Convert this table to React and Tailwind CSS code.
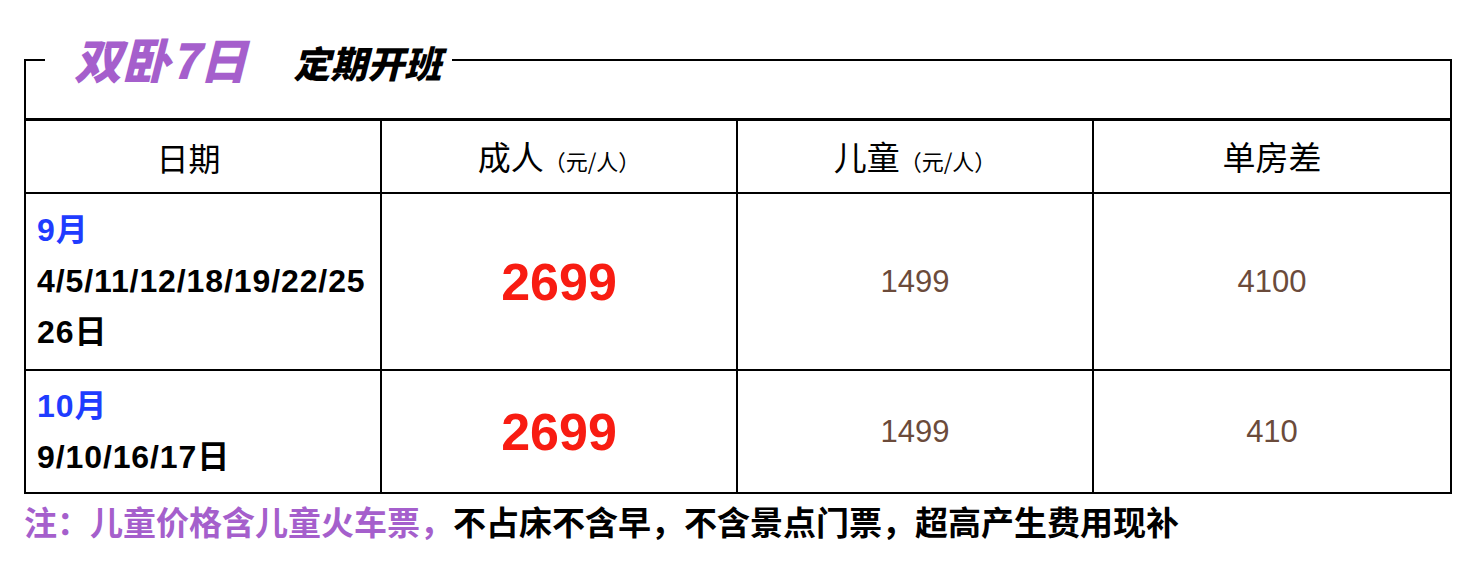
import React from "react";

const cjk = "font-['Noto_Sans_CJK_SC',sans-serif]";
const mixed = "font-['Liberation_Sans','Noto_Sans_CJK_SC',sans-serif]";

function Cell({ children, className = "" }) {
  return <div className={`flex items-center ${className}`}>{children}</div>;
}

function HeadWithUnit({ main }) {
  return (
    <div className={`${cjk} flex items-baseline text-black`}>
      <span className="text-[33px]">{main}</span>
      <span className="text-[22px]">（元/人）</span>
    </div>
  );
}

export default function App() {
  const rows = [
    {
      month: "9月",
      dates: ["4/5/11/12/18/19/22/25", "26日"],
      adult: "2699",
      child: "1499",
      single: "4100",
      h: "h-[177px] border-b-2",
    },
    {
      month: "10月",
      dates: ["9/10/16/17日"],
      adult: "2699",
      child: "1499",
      single: "410",
      h: "h-[121px]",
    },
  ];

  return (
    <div className={`w-[1464px] h-[572px] bg-white pl-[24px] pt-[35px] ${mixed}`}>
      <fieldset className="m-0 w-[1428px] border-2 border-black p-0">
        <legend className="ml-[19px] p-0">
          <div className="flex h-[50px] items-end pl-[29px] pr-[11px]">
            <span className={`${cjk} mb-[3px] text-[48px] leading-none font-black italic text-[#a55fcc]`}>
              双卧7日
            </span>
            <span className={`${cjk} mb-[4px] ml-[46px] text-[37px] leading-none font-black italic text-black`}>
              定期开班
            </span>
          </div>
        </legend>
        <div className="h-[33px]" />
        <div className="grid grid-cols-4 border-t-[3px] border-black">
          <Cell className="h-[73px] justify-center border-r-2 border-b-2 border-black pr-[29px]">
            <span className={`${cjk} text-[32px] text-black`}>日期</span>
          </Cell>
          <Cell className="h-[73px] justify-center border-r-2 border-b-2 border-black">
            <HeadWithUnit main="成人" />
          </Cell>
          <Cell className="h-[73px] justify-center border-r-2 border-b-2 border-black">
            <HeadWithUnit main="儿童" />
          </Cell>
          <Cell className="h-[73px] justify-center border-b-2 border-black">
            <span className={`${cjk} text-[33px] text-black`}>单房差</span>
          </Cell>

          {rows.map((r, i) => (
            <React.Fragment key={i}>
              <Cell className={`${r.h} border-r-2 border-black pl-[11px]`}>
                <div className="text-[32px] leading-[51px] font-bold tracking-[0.9px]">
                  <div className="text-[#1f3cff]">{r.month}</div>
                  {r.dates.map((d) => (
                    <div key={d} className="text-black">
                      {d}
                    </div>
                  ))}
                </div>
              </Cell>
              <Cell className={`${r.h} justify-center border-r-2 border-black`}>
                <span className="text-[52px] leading-none font-bold text-[#f81c12]">{r.adult}</span>
              </Cell>
              <Cell className={`${r.h} justify-center border-r-2 border-black`}>
                <span className="text-[31px] leading-none text-[#6b4b3b]">{r.child}</span>
              </Cell>
              <Cell className={`${r.h} justify-center border-black`}>
                <span className="text-[31px] leading-none text-[#6b4b3b]">{r.single}</span>
              </Cell>
            </React.Fragment>
          ))}
        </div>
      </fieldset>
      <p className={`${cjk} mt-[5px] text-[33px] leading-[44px] font-bold`}>
        <span className="text-[#a55fcc]">注：儿童价格含儿童火车票，</span>
        <span className="text-black">不占床不含早，不含景点门票，超高产生费用现补</span>
      </p>
    </div>
  );
}
